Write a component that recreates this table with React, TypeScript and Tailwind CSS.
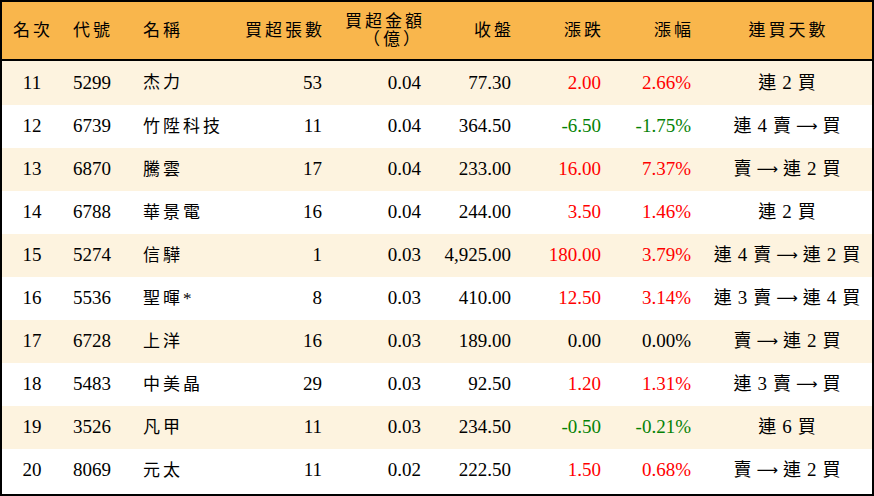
import React from 'react';

type Row = {
  rank: number;
  code: string;
  name: string;
  lots: number;
  amount: string;
  close: string;
  change: string;
  pct: string;
  streak: string;
};

const ROWS: Row[] = [
  { rank: 11, code: '5299', name: '杰力', lots: 53, amount: '0.04', close: '77.30', change: '2.00', pct: '2.66%', streak: '連 2 買' },
  { rank: 12, code: '6739', name: '竹陞科技', lots: 11, amount: '0.04', close: '364.50', change: '-6.50', pct: '-1.75%', streak: '連 4 賣 → 買' },
  { rank: 13, code: '6870', name: '騰雲', lots: 17, amount: '0.04', close: '233.00', change: '16.00', pct: '7.37%', streak: '賣 → 連 2 買' },
  { rank: 14, code: '6788', name: '華景電', lots: 16, amount: '0.04', close: '244.00', change: '3.50', pct: '1.46%', streak: '連 2 買' },
  { rank: 15, code: '5274', name: '信驊', lots: 1, amount: '0.03', close: '4,925.00', change: '180.00', pct: '3.79%', streak: '連 4 賣 → 連 2 買' },
  { rank: 16, code: '5536', name: '聖暉*', lots: 8, amount: '0.03', close: '410.00', change: '12.50', pct: '3.14%', streak: '連 3 賣 → 連 4 買' },
  { rank: 17, code: '6728', name: '上洋', lots: 16, amount: '0.03', close: '189.00', change: '0.00', pct: '0.00%', streak: '賣 → 連 2 買' },
  { rank: 18, code: '5483', name: '中美晶', lots: 29, amount: '0.03', close: '92.50', change: '1.20', pct: '1.31%', streak: '連 3 賣 → 買' },
  { rank: 19, code: '3526', name: '凡甲', lots: 11, amount: '0.03', close: '234.50', change: '-0.50', pct: '-0.21%', streak: '連 6 買' },
  { rank: 20, code: '8069', name: '元太', lots: 11, amount: '0.02', close: '222.50', change: '1.50', pct: '0.68%', streak: '賣 → 連 2 買' },
];

// red for up, green for down, black for flat
const tone = (v: string) =>
  v.startsWith('-') ? 'text-[#058205]' : parseFloat(v) === 0 ? 'text-black' : 'text-[#ff0000]';

const COLS = 'grid grid-cols-[60px_70px_110px_90px_100px_90px_90px_90px_170px]';

// "連 4 賣 → 買" -> spaced tokens, the arrow uses a long thin glyph
const Streak: React.FC<{ text: string }> = ({ text }) => (
  <div className="flex items-center justify-center gap-[5px] whitespace-nowrap">
    {text.split(' ').map((t, i) =>
      t === '→' ? (
        <span key={i} className="text-[15px] leading-none" style={{ fontFamily: '"DejaVu Sans", sans-serif' }}>
          ⟶
        </span>
      ) : /\d/.test(t) ? (
        <span key={i} className="text-[19px] px-[1px]">{t}</span>
      ) : (
        <span key={i} className="text-[18px]">{t}</span>
      )
    )}
  </div>
);

export default function App() {
  return (
    <div
      className="w-[874px] h-[496px] border-2 border-black bg-white text-black overflow-hidden"
      style={{ fontFamily: '"Liberation Serif", "Noto Sans CJK TC", serif' }}
    >
      {/* Header */}
      <div className={`${COLS} h-[59px] items-center bg-[#f9b64c] border-b-2 border-black text-[17px] tracking-[3px]`}>
        <div className="pl-[11px]">名次</div>
        <div className="pl-[11px]">代號</div>
        <div className="pl-[11px]">名稱</div>
        <div className="text-right pr-[7px]">買超張數</div>
        <div className="text-right pr-[7px] leading-[18px]">
          <div>買超金額</div>
          <div className="pr-[2px]">（億）</div>
        </div>
        <div className="text-right pr-[8px]">收盤</div>
        <div className="text-right pr-[8px]">漲跌</div>
        <div className="text-right pr-[8px]">漲幅</div>
        <div className="text-center pl-[3px]">連買天數</div>
      </div>

      {/* Rows */}
      {ROWS.map((r, i) => (
        <div
          key={r.rank}
          className={`${COLS} ${i === 0 ? 'h-[44px]' : 'h-[43px]'} items-center text-[19px] ${
            i % 2 === 0 ? 'bg-[#fdf3df]' : 'bg-white'
          }`}
        >
          <div className="text-center">{r.rank}</div>
          <div className="pl-[11px]">{r.code}</div>
          <div className="pl-[11px] text-[17px] tracking-[3px]">{r.name}</div>
          <div className="text-right pr-[10px]">{r.lots}</div>
          <div className="text-right pr-[11px]">{r.amount}</div>
          <div className="text-right pr-[11px]">{r.close}</div>
          <div className={`text-right pr-[11px] ${tone(r.change)}`}>{r.change}</div>
          <div className={`text-right pr-[11px] ${tone(r.pct)}`}>{r.pct}</div>
          <Streak text={r.streak} />
        </div>
      ))}
    </div>
  );
}
